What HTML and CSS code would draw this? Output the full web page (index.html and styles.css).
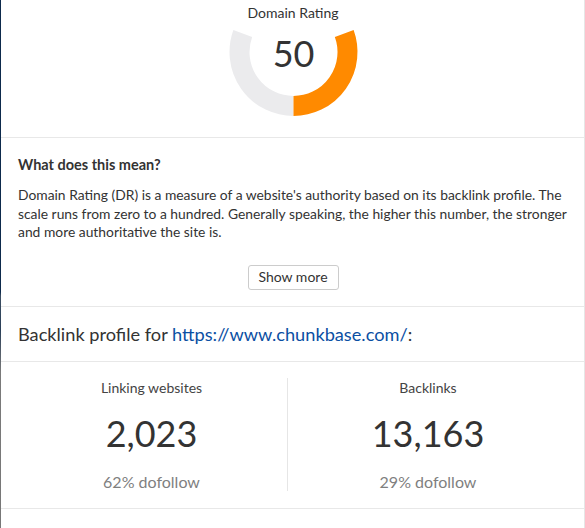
FILE: index.html
```html
<!DOCTYPE html>
<html lang="en">
<head>
<meta charset="utf-8">
<title>Domain Rating</title>
<link rel="stylesheet" href="styles.css">
</head>
<body>
<div class="backdrop-strip"></div>
<main class="panel">
  <section class="dr">
    <div class="dr-label">Domain Rating</div>
    <svg class="gauge" width="130" height="92" viewBox="-65 -25 130 92" aria-label="Domain Rating 50">
      <path class="gauge-track" d="M -50.74 -18.47 A 54 54 0 0 0 0 54"/>
      <path class="gauge-fill" d="M 0 54 A 54 54 0 0 0 50.74 -18.47"/>
      <text class="gauge-value" x="0" y="14.5" text-anchor="middle">50</text>
    </svg>
  </section>

  <section class="explain">
    <h3 class="explain-title">What does this mean?</h3>
    <p class="explain-text">Domain Rating (DR) is a measure of a website's authority based on its backlink profile. The scale runs from zero to a hundred. Generally speaking, the higher this number, the stronger and more authoritative the site is.</p>
    <div class="explain-actions"><button class="btn" type="button">Show more</button></div>
  </section>

  <section class="profile-head">
    <h2 class="profile-title">Backlink profile for <a class="profile-link" href="#">https://www.chunkbase.com/</a>:</h2>
  </section>

  <section class="stats">
    <div class="stat stat-left">
      <div class="stat-label">Linking websites</div>
      <div class="stat-value">2,023</div>
      <div class="stat-sub">62% dofollow</div>
    </div>
    <div class="stat-divider"></div>
    <div class="stat stat-right">
      <div class="stat-label">Backlinks</div>
      <div class="stat-value">13,163</div>
      <div class="stat-sub">29% dofollow</div>
    </div>
  </section>

  <div class="tail"></div>
</main>
</body>
</html>
```

FILE: styles.css
```css
html, body {
  margin: 0;
  padding: 0;
  height: 100%;
}

body {
  display: flex;
  align-items: stretch;
  background: #ffffff;
  font-family: Lato, "Open Sans", "Liberation Sans", sans-serif;
  color: #333333;
  overflow: hidden;
}

.backdrop-strip {
  width: 1px;
  flex: 0 0 1px;
  background: linear-gradient(to bottom,
    #0d2a4c 0px, #0d2a4c 292px,
    #3d4f63 296px, #2a3f58 330px,
    #7a7a7a 372px, #777777 528px);
}

.panel {
  width: 583px;
  flex: 0 0 583px;
  border-right: 1px solid #e6e6e6;
  background: #ffffff;
  display: flex;
  flex-direction: column;
}

/* Domain Rating gauge */
.dr {
  height: 138px;
  box-sizing: border-box;
  border-bottom: 1px solid #e8e8e8;
  padding-top: 4px;
  display: flex;
  flex-direction: column;
  align-items: center;
}

.dr-label {
  font-size: 14px;
  line-height: 17px;
  color: #333333;
  transform: translateX(0.5px);
}

.gauge {
  display: block;
  margin-top: 6px;
  transform: translateX(0.5px);
}

.gauge-track,
.gauge-fill {
  fill: none;
  stroke-width: 20;
  stroke-linecap: butt;
}

.gauge-track { stroke: #ebebed; }
.gauge-fill { stroke: #ff8a00; }

.gauge-value {
  font-family: Lato, "Open Sans", "Liberation Sans", sans-serif;
  font-size: 36px;
  fill: #333333;
}

/* Explanation */
.explain {
  box-sizing: border-box;
  height: 169px;
  border-bottom: 1px solid #e8e8e8;
  padding: 18px 17px 0 17px;
}

.explain-title {
  margin: 0;
  font-size: 14.5px;
  line-height: 18px;
  font-weight: 700;
  color: #333333;
}

.explain-text {
  margin: 12px 0 0 0;
  font-size: 13.85px;
  line-height: 18.5px;
  color: #333333;
}

.explain-actions {
  display: flex;
  justify-content: center;
  margin-top: 23px;
  padding-left: 1px;
}

.btn {
  font-family: Lato, "Open Sans", "Liberation Sans", sans-serif;
  font-size: 14px;
  line-height: 16px;
  color: #333333;
  background: #ffffff;
  border: 1px solid #cccccc;
  border-radius: 3px;
  height: 25px;
  width: 91px;
  padding: 0;
  cursor: pointer;
}

/* Profile header */
.profile-head {
  box-sizing: border-box;
  height: 55px;
  border-bottom: 1px solid #e8e8e8;
  padding: 16px 17px 0 17px;
}

.profile-title {
  margin: 0;
  font-size: 18.2px;
  line-height: 22px;
  font-weight: 400;
  color: #333333;
}

.profile-link {
  color: #0b4fa3;
  text-decoration: none;
}

/* Stats */
.stats {
  box-sizing: border-box;
  height: 147px;
  border-bottom: 1px solid #e8e8e8;
  padding: 17px 0 0 15px;
  display: grid;
  grid-template-columns: 271px 1px 280px;
  align-items: start;
}

.stat {
  display: flex;
  flex-direction: column;
  align-items: center;
  text-align: center;
}

.stat-divider {
  height: 113px;
  margin-top: -1px;
  background: #e6e6e6;
}

.stat-label {
  font-size: 14px;
  line-height: 17px;
  color: #444444;
}

.stat-value {
  margin-top: 15px;
  font-size: 36px;
  line-height: 44px;
  color: #333333;
}

.stat-sub {
  margin-top: 17px;
  font-size: 16px;
  line-height: 19px;
  color: #7f7f7f;
}

.tail {
  flex: 1 1 auto;
  background: #ffffff;
}
```
